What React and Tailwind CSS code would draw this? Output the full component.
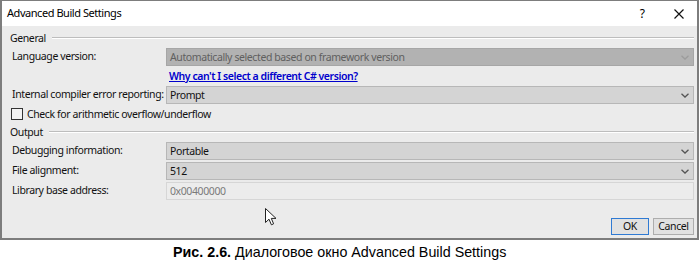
import React from "react";

const font = { fontFamily: '"Noto Sans", "Liberation Sans", sans-serif' };

function Chevron({ color = "#555" }) {
  return (
    <svg width="8" height="5" viewBox="0 0 8 5" className="shrink-0">
      <path d="M0.5 0.8 L4 4 L7.5 0.8" fill="none" stroke={color} strokeWidth="1.3" />
    </svg>
  );
}

function Select({ value, disabled }) {
  return (
    <div
      className={
        "flex-1 h-[18px] flex items-center justify-between pl-[3px] pr-[4px] border " +
        (disabled
          ? "bg-[#b2b2b2] border-[#a6a6a6] text-[#606060]"
          : "bg-[#d4d4d4] border-[#b7b7b7] text-[#111]")
      }
    >
      <span className="leading-none whitespace-nowrap">{value}</span>
      <Chevron color={disabled ? "#9c9c9c" : "#555"} />
    </div>
  );
}

function Row({ label, children, className = "" }) {
  return (
    <div className={"flex items-center h-[18px] " + className}>
      <div className="w-[156px] shrink-0 pl-[2px] text-[#111] whitespace-nowrap">{label}</div>
      {children}
    </div>
  );
}

function Section({ title, className = "" }) {
  return (
    <div className={"flex items-center h-[14px] " + className}>
      <span className="text-[#111] leading-none">{title}</span>
      <div className="flex-1 ml-[6px] h-[2px] border-t border-[#bdbdbd] border-b-white border-b" />
    </div>
  );
}

export default function App() {
  return (
    <div className="w-[700px] h-[272px] bg-white relative overflow-hidden" style={font}>
      <div className="w-[699px] h-[240px] border-2 border-t border-[#7d7d7d] flex flex-col">
        <div className="h-[25px] bg-white flex items-center pl-[5px] pr-[13px] shrink-0">
          <span className="text-[11px] tracking-[-0.45px] text-black">Advanced Build Settings</span>
          <span className="ml-auto text-[12px] text-black mr-[29px]">?</span>
          <svg width="10" height="10" viewBox="0 0 10 10">
            <path d="M0.5 0.5 L9.5 9.5 M9.5 0.5 L0.5 9.5" stroke="#111" strokeWidth="1.2" />
          </svg>
        </div>
        <div className="flex-1 bg-[#ebebeb] flex flex-col pl-[8px] pr-[3px] text-[10.5px] tracking-[-0.4px]">
          <Section title="General" className="mt-[5px]" />
          <Row label="Language version:" className="mt-[3px]">
            <Select value="Automatically selected based on framework version" disabled />
          </Row>
          <div className="h-[20px] flex items-center pl-[159px]">
            <span className="text-[#0000cc] font-semibold underline leading-none tracking-[-0.45px]">
              Why can't I select a different C# version?
            </span>
          </div>
          <Row label="Internal compiler error reporting:">
            <Select value="Prompt" />
          </Row>
          <div className="flex items-center h-[14px] mt-[3px]">
            <div className="w-[12px] h-[12px] border border-[#333] bg-[#f3f3f3] ml-[1px]" />
            <span className="ml-[4px] text-[#111] leading-none whitespace-nowrap">Check for arithmetic overflow/underflow</span>
          </div>
          <Section title="Output" className="mt-[4px]" />
          <Row label="Debugging information:" className="mt-[3px]">
            <Select value="Portable" />
          </Row>
          <Row label="File alignment:" className="mt-[2px]">
            <Select value="512" />
          </Row>
          <Row label="Library base address:" className="mt-[2px]">
            <div className="flex-1 h-[18px] flex items-center pl-[3px] border border-[#d6d6d6] bg-[#ececec] text-[#7a7a7a]">
              <span className="leading-none">0x00400000</span>
            </div>
          </Row>
          <div className="flex justify-end gap-[4px] mt-[18px]">
            <div className="w-[38px] h-[17px] flex items-center justify-center bg-[#e1e1e1] border border-[#2f7ad3] text-[#111] leading-none">
              OK
            </div>
            <div className="w-[41px] h-[17px] flex items-center justify-center bg-[#e1e1e1] border border-[#adadad] text-[#111] leading-none">
              Cancel
            </div>
          </div>
        </div>
      </div>
      <div className="absolute left-[265px] top-[208px]">
        <svg width="12" height="18" viewBox="0 0 12 18">
          <path d="M0.5 0.5 L0.5 14.5 L4 11.2 L6.4 16.8 L8.6 15.8 L6.3 10.4 L11 10.4 Z" fill="#fff" stroke="#222" strokeWidth="1" strokeLinejoin="round" />
        </svg>
      </div>
      <div className="mt-[5px] h-[16px] flex items-center pl-[173px] text-[14.3px] text-black" style={{ fontFamily: '"Liberation Sans", Arial, sans-serif' }}>
        <span className="font-bold">Рис. 2.6.</span>
        <span>&nbsp;Диалоговое окно Advanced Build Settings</span>
      </div>
    </div>
  );
}
